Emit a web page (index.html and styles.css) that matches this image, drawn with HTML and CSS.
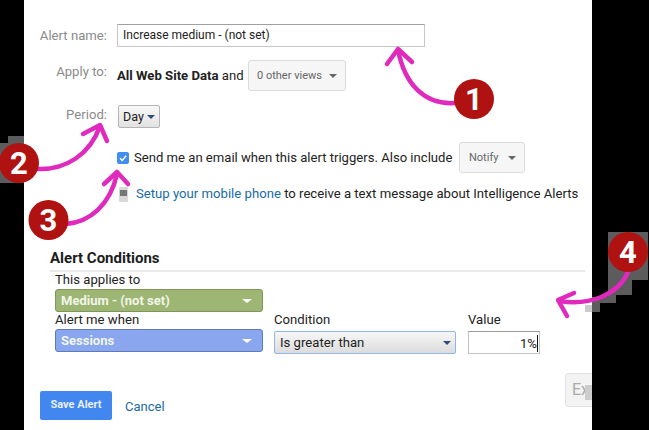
FILE: index.html
```html
<!DOCTYPE html>
<html>
<head>
<meta charset="UTF-8">
<title>Alert</title>
<link rel="stylesheet" href="styles.css">
</head>
<body>
<div class="stage">
	<div class="panel">
		<div class="row row-name">
			<div class="lbl">Alert name:</div>
			<div class="txt">Increase medium - (not set)</div>
		</div>
		<div class="row row-apply">
			<div class="lbl lbl-up">Apply to:</div>
			<div class="apply-text"><b>All Web Site Data</b> and</div>
			<div class="btn btn-views">0 other views <i class="caret caret-grey"></i></div>
		</div>
		<div class="row row-period">
			<div class="lbl lbl-up2">Period:</div>
			<div class="day">Day <i class="caret caret-navy"></i></div>
		</div>
		<div class="row row-mail">
			<div class="lbl"></div>
			<div class="check"><svg width="12" height="12" viewBox="0 0 12 12"><path d="M3 6.2l2.2 2.2L9.2 3.8" fill="none" stroke="#fff" stroke-width="1.5"/></svg></div>
			<div class="mail-text">Send me an email when this alert triggers. Also include</div>
			<div class="btn btn-notify">Notify <i class="caret caret-grey"></i></div>
		</div>
		<div class="row row-phone">
			<div class="lbl"></div>
			<div class="phone"><div class="phone-screen"></div></div>
			<div class="phone-text"><a class="link">Setup your mobile phone</a> to receive a text message about Intelligence Alerts</div>
		</div>

		<div class="conditions">
			<div class="cond-title">Alert Conditions</div>
			<div class="cond-body">
				<div class="field-lbl">This applies to</div>
				<div class="pick pick-green">Medium - (not set) <i class="caret caret-white"></i></div>
				<div class="cond-row">
					<div class="col col-metric">
						<div class="field-lbl">Alert me when</div>
						<div class="pick pick-blue">Sessions <i class="caret caret-white"></i></div>
					</div>
					<div class="col col-cond">
						<div class="field-lbl">Condition</div>
						<div class="select">Is greater than <i class="caret caret-navy"></i></div>
					</div>
					<div class="col col-value">
						<div class="field-lbl">Value</div>
						<div class="value"><span class="cursor">1%</span></div>
					</div>
				</div>
			</div>
		</div>

		<div class="foot">
			<div class="save">Save Alert</div>
			<a class="link cancel">Cancel</a>
			<div class="ex">Ex</div>
		</div>
	</div>

	<svg class="marks" width="649" height="430" viewBox="0 0 649 430">
		<!-- 검은 여백 위 회색 얼룩 -->
		<path class="smudge" d="M0 143H8V136H24V183H0Z"/>
		<path class="smudge" d="M608 232H648V280H632V295H616V303H600V312H592V297H608Z"/>
		<rect x="585" y="385" width="7" height="15" fill="#ccc"/>
		<rect x="585" y="305" width="7" height="7" fill="#ccc"/>

		<path class="arrow" d="M455 103C425 105 405 85 398 50"/>
		<path class="arrow" d="M387 64L398 49L412 62"/>
		<path class="arrow" d="M38 169C65 170 90 155 100 126"/>
		<path class="arrow" d="M83 134L100 125L107 141"/>
		<path class="arrow" d="M66 224C90 222 110 205 117 174"/>
		<path class="arrow" d="M104 184L117 172L128 184"/>
		<path class="arrow" d="M628 272C618 295 590 306 559 301"/>
		<path class="arrow" d="M574 293L558 300L567 316"/>

		<circle class="dot" cx="474" cy="99" r="20"/>
		<circle class="dot" cx="19" cy="163" r="20"/>
		<circle class="dot" cx="48.500" cy="220" r="20"/>
		<circle class="dot" cx="628" cy="252" r="20"/>
		<text class="num" x="474" y="110">1</text>
		<text class="num" x="19" y="174">2</text>
		<text class="num" x="48.500" y="231">3</text>
		<text class="num" x="628" y="263">4</text>
	</svg>
</div>
</body>
</html>
```

FILE: styles.css
```css
* {box-sizing: border-box;}
html, body {margin: 0; padding: 0; background: #000; overflow: hidden;}
body {font-family: Roboto, "Liberation Sans", sans-serif; font-size: 13.150px; color: #222;}

.stage {position: relative; width: 649px; height: 430px;}
.panel {width: 568px; height: 430px; margin-left: 24px; padding-top: 24px; background: #fff; overflow: hidden;}
.marks {position: absolute; left: 0; top: 0;}

.row {display: flex; align-items: center;}
.lbl {width: 83px; margin-right: 10px; text-align: right; color: #8a8a8a; flex: none;}
.lbl-up {position: relative; top: -4px;}
.lbl-up2 {position: relative; top: -2px;}

.row-name {height: 23px;}
.row-apply {height: 31px; margin-top: 13px;}
.row-period {height: 23px; margin-top: 14px;}
.row-mail {height: 31px; margin-top: 14px;}
.row-phone {height: 16px; margin-top: 12px;}

.txt {width: 308px; height: 23px; padding: 0 5px; line-height: 21px; font-size: 12px; border: 1px solid #c8c8c8; border-top-color: #a0a0a0;}
.apply-text {width: 125px; margin-right: 6px; white-space: nowrap;}
.btn {display: flex; align-items: center; justify-content: space-between; height: 31px; padding: 0 8px; border: 1px solid #dcdcdc; border-radius: 3px; background: #f6f6f6; color: #666; font-size: 11px;}
.btn-views {width: 98px;}
.btn-notify {width: 66px; margin-left: 6px; padding: 0 8px 0 9px;}
.day {display: flex; align-items: center; gap: 3px; height: 23px; margin-left: 1px; padding: 0 4px; font-size: 12.500px; border: 1px solid #b4b4b4; border-radius: 2px; background: linear-gradient(#f8f8f8, #e2e2e2);}

.caret {display: inline-block; width: 0; height: 0; border-left: 4px solid transparent; border-right: 4px solid transparent; border-top: 4px solid #666;}
.caret-navy {border-top-color: #2f4a7c;}
.caret-white {border-left-width: 5px; border-right-width: 5px; border-top: 4px solid #fff;}

.check {display: flex; width: 12px; height: 12px; margin-right: 5px; border-radius: 2px; background: #3f8ef0;}
.mail-text {width: 319px; font-size: 13.100px; white-space: nowrap;}
.phone {width: 9px; height: 15px; margin: 2px 8px 0 2px; padding: 3px 1px 0; background: #d8d8d8; border-radius: 1px;}
.phone-screen {height: 6px; background: #777;}
.phone-text {white-space: nowrap;}
.link {color: #1a6ba5;}

.conditions {width: 535px; margin: 49px 0 0 26px;}
.cond-title {height: 20px; line-height: 17px; font-size: 15px; font-weight: 700; color: #1c1c1c;}
.cond-body {padding: 0 0 0 5px; border-top: 2px solid #e9e9e9;}
.field-lbl {height: 16px; line-height: 15px;}
.pick {display: flex; align-items: center; justify-content: space-between; width: 208px; height: 23px; padding: 0 5px; margin-top: 1px; border-radius: 3px; color: #f1f5e8; font-size: 13px; font-weight: 700;}
.pick .caret {margin-right: 5px;}
.pick-green {background: #9db674; border: 1px solid #7d9758;}
.pick-blue {background: #8aa6ee; border: 1px solid #5f7ab9;}

.cond-row {display: flex; margin-top: 0;}
.col-metric {width: 208px; margin-right: 11px;}
.col-cond {width: 182px; margin-right: 12px;}
.col-value {width: 72px;}
.select {display: flex; align-items: center; justify-content: space-between; height: 23px; margin-top: 3px; padding: 0 4px 0 5px; border: 1px solid #8fb8e8; border-radius: 2px; background: linear-gradient(#f7f7f7, #dcdcdc);}
.value {height: 23px; margin-top: 3px; padding-right: 1px; line-height: 21px; text-align: right; border: 1px solid #c4c4c4; border-top-color: #9a9a9a;}
.cursor {display: inline-block; height: 17px; line-height: 17px; border-right: 1px solid #111; vertical-align: middle;}

.foot {display: flex; align-items: center; margin: 37px 0 0 16px;}
.save {width: 72px; height: 29px; line-height: 27px; text-align: center; background: #4287f0; border-radius: 2px; color: #e8f0fd; font-size: 11px; font-weight: 700;}
.cancel {margin: 2px 0 0 13px; font-size: 13px;}
.ex {align-self: flex-start; width: 40px; height: 34px; margin: -18px -13px 0 auto; padding-left: 6px; line-height: 32px; background: #f3f3f3; border: 1px solid #e2e2e2; border-radius: 3px; color: #aaa; font-size: 16px;}

.smudge {fill: #5c5c5c;}
.arrow {fill: none; stroke: #e02abd; stroke-width: 4.500; stroke-linecap: round; stroke-linejoin: round;}
.dot {fill: #b01212;}
.num {fill: #fff; font-family: Roboto, "Liberation Sans", sans-serif; font-size: 31px; font-weight: 700; text-anchor: middle;}
```
